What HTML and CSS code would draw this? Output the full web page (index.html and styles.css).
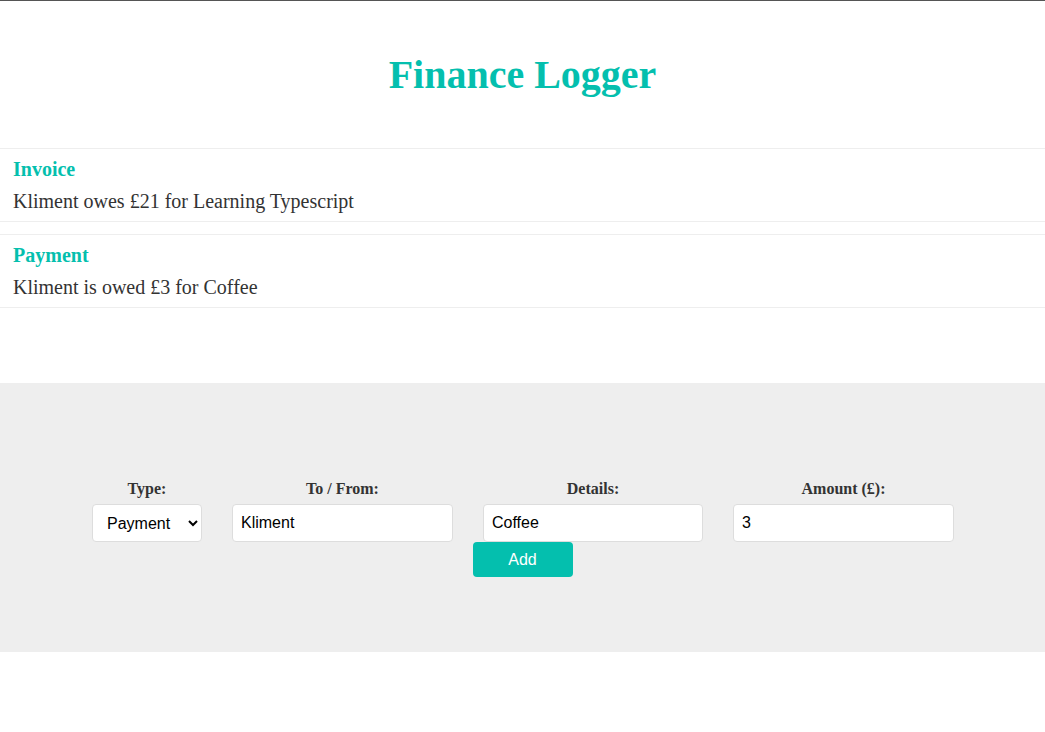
FILE: index.html
```html
<!DOCTYPE html>
<html lang="en">
<head>
<meta charset="utf-8">
<title>Finance Logger</title>
<link rel="stylesheet" href="styles.css">
</head>
<body>
<header class="header">
  <h1 class="title">Finance Logger</h1>
</header>
<div class="wrapper">
  <ul class="item-list">
    <li class="item">
      <h4 class="item-type">Invoice</h4>
      <p class="item-text">Kliment owes £21 for Learning Typescript</p>
    </li>
    <li class="item">
      <h4 class="item-type">Payment</h4>
      <p class="item-text">Kliment is owed £3 for Coffee</p>
    </li>
  </ul>
</div>
<footer class="form-area">
  <form class="new-item-form">
    <div class="fields">
      <div class="field">
        <label class="label">Type:</label>
        <select class="control select" id="type">
          <option value="invoice">Invoice</option>
          <option value="payment" selected>Payment</option>
        </select>
      </div>
      <div class="field">
        <label class="label">To / From:</label>
        <input class="control text-input" type="text" value="Kliment">
      </div>
      <div class="field">
        <label class="label">Details:</label>
        <input class="control text-input text-input--narrow" type="text" value="Coffee">
      </div>
      <div class="field">
        <label class="label">Amount (£):</label>
        <input class="control text-input" type="number" value="3">
      </div>
    </div>
    <button class="add-btn" type="button">Add</button>
  </form>
</footer>
</body>
</html>
```
FILE: styles.css
```css
html, body {
  margin: 0;
  padding: 0;
  background: #fff;
}
body {
  font-family: "Liberation Serif", "Times New Roman", serif;
  color: #333;
  border-top: 1px solid #555;
}
.header {
  padding: 50px 0;
  text-align: center;
}
.title {
  margin: 0;
  font-size: 40px;
  line-height: 47px;
  color: #04bfae;
  font-weight: bold;
}
.item-list {
  list-style: none;
  margin: 0;
  padding: 0;
}
.item {
  border-top: 1px solid #eee;
  border-bottom: 1px solid #eee;
  padding: 9px 13px 8px;
  margin-bottom: 12px;
}
.item-type {
  margin: 0 0 9px;
  font-size: 20px;
  line-height: 23px;
  color: #04bfae;
  font-weight: bold;
}
.item-text {
  margin: 0;
  font-size: 20px;
  line-height: 23px;
  color: #333;
}
.form-area {
  margin-top: 75px;
  background: #eee;
  padding: 96px 0 75px;
}
.new-item-form {
  display: flex;
  flex-direction: column;
  align-items: center;
}
.fields {
  display: flex;
  justify-content: center;
  gap: 30px;
  padding-left: 1px;
}
.field {
  display: flex;
  flex-direction: column;
  align-items: center;
}
.label {
  font-size: 16px;
  font-weight: bold;
  line-height: 19px;
  margin-bottom: 6px;
  color: #333;
}
.control {
  box-sizing: border-box;
  height: 38px;
  border: 1px solid #ddd;
  border-radius: 4px;
  background: #fff;
  font-family: "Liberation Sans", Arial, sans-serif;
  font-size: 16px;
  color: #000;
  padding: 0 8px;
}
.select {
  width: 110px;
  padding: 0 8px 0 10px;
}
.text-input {
  width: 221px;
}
.text-input--narrow {
  width: 220px;
}
.add-btn {
  width: 100px;
  height: 35px;
  border: none;
  border-radius: 4px;
  background: #04bfae;
  color: #fff;
  font-family: "Liberation Sans", Arial, sans-serif;
  font-size: 16px;
  cursor: pointer;
}
```
